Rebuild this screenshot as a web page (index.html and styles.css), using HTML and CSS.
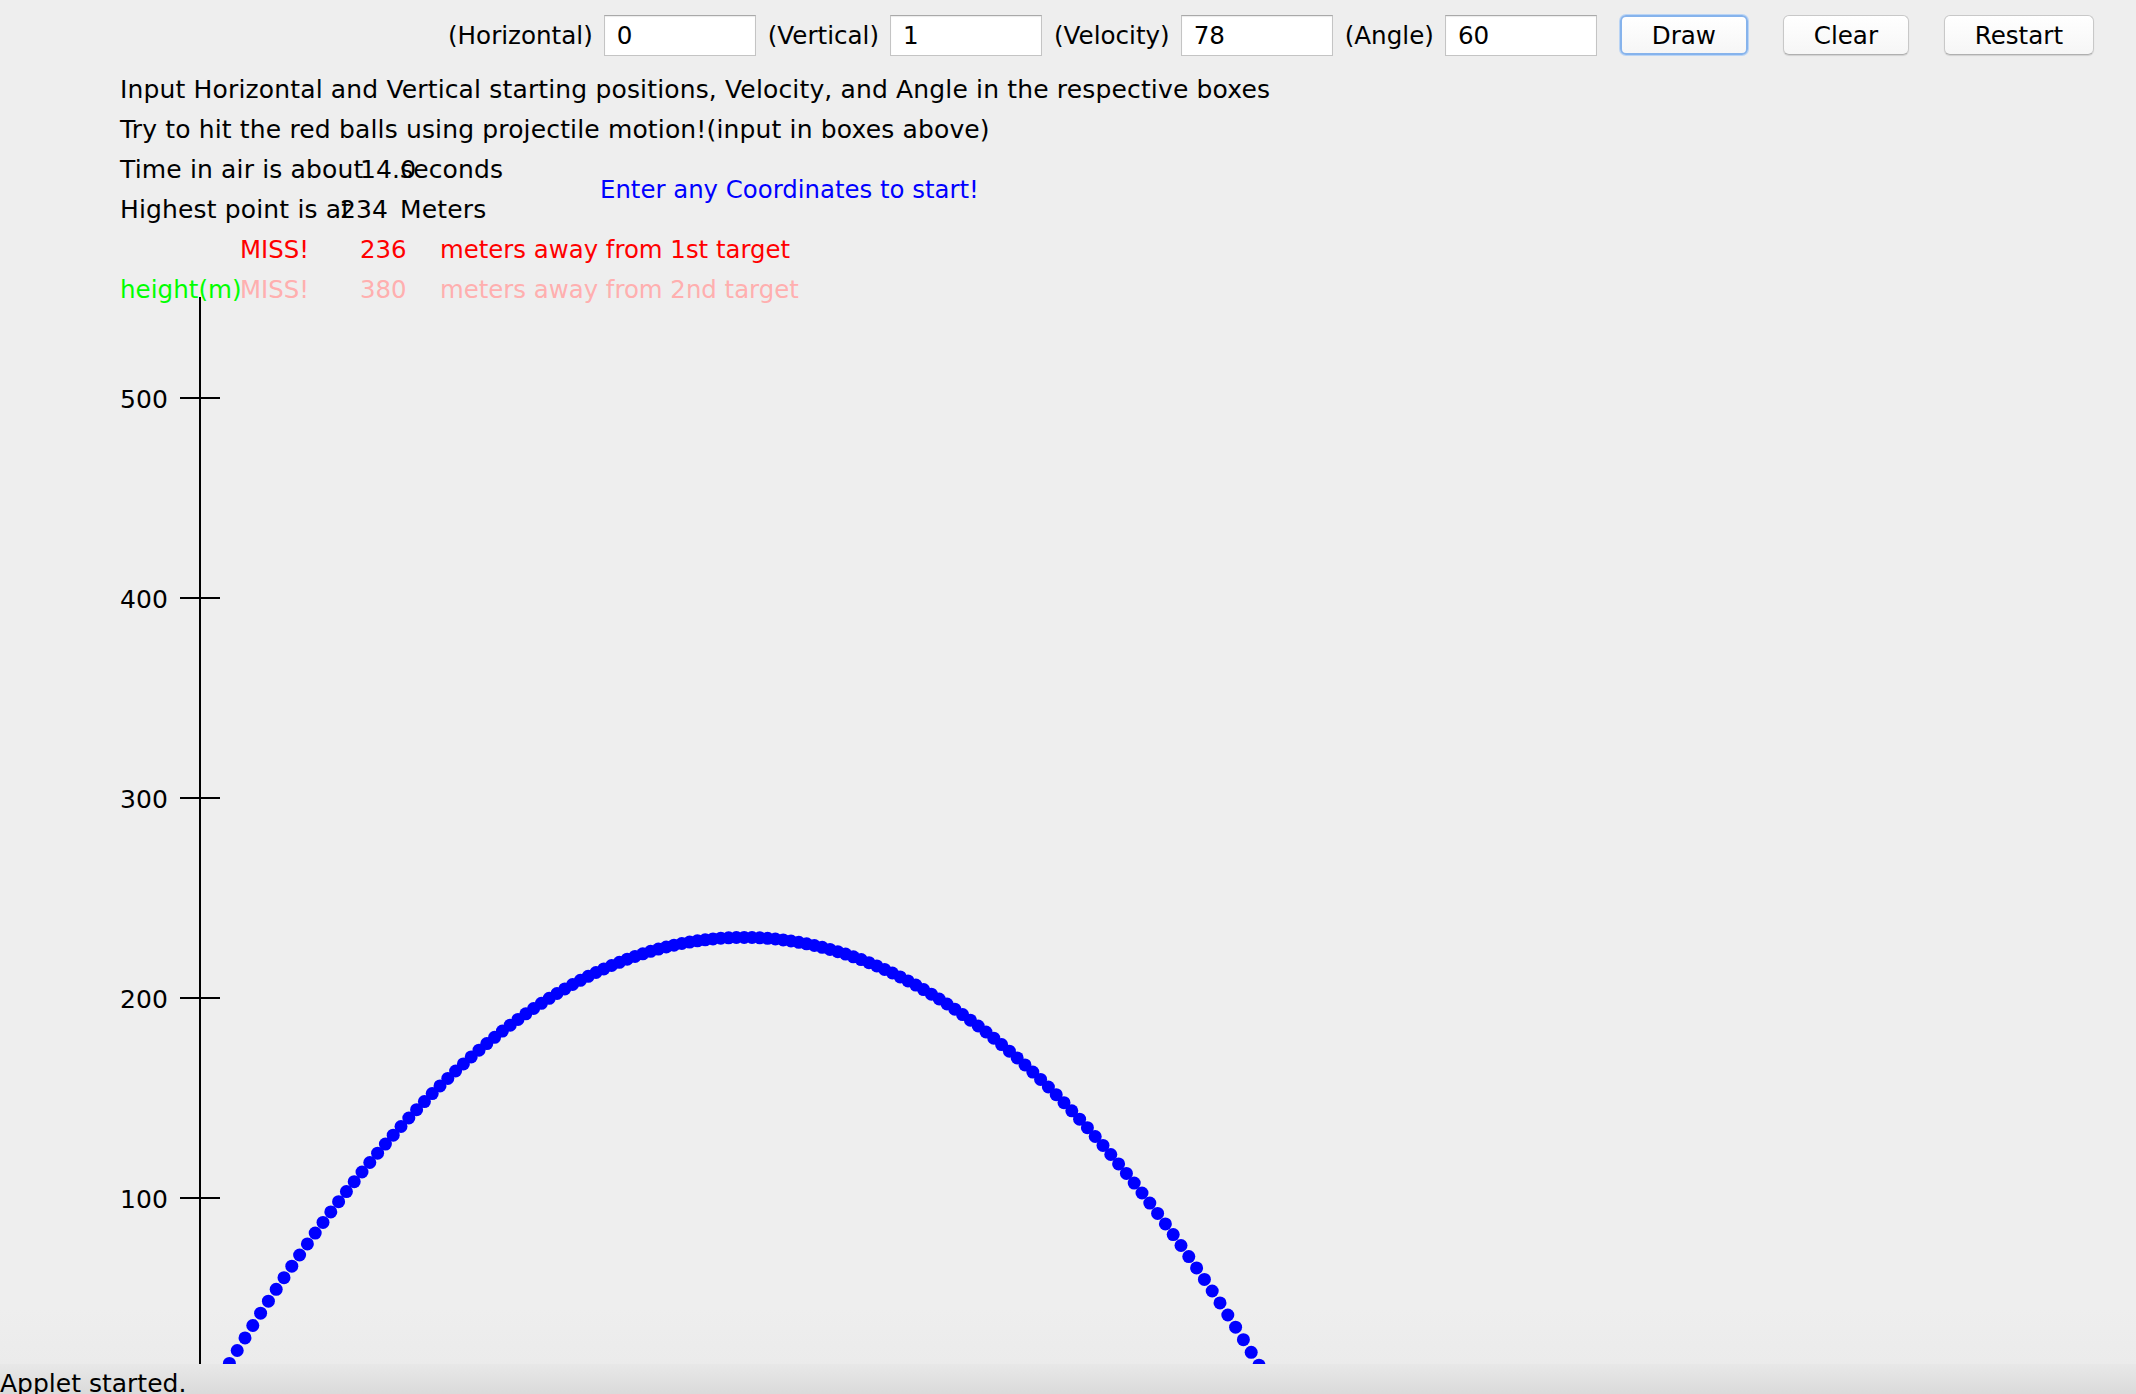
FILE: index.html
```html
<!DOCTYPE html>
<html>
<head>
<meta charset="utf-8">
<link rel="stylesheet" href="styles.css">
</head>
<body>
<div class="applet">
  <div class="toolbar">
    <span class="lbl">(Horizontal)</span><span class="field">0</span>
    <span class="lbl">(Vertical)</span><span class="field">1</span>
    <span class="lbl">(Velocity)</span><span class="field">78</span>
    <span class="lbl">(Angle)</span><span class="field">60</span>
    <span class="btn btn-focus">Draw</span>
    <span class="btn">Clear</span>
    <span class="btn btn-wide">Restart</span>
  </div>
  <div class="canvas">
    <svg id="plot" class="plot" viewBox="0 70 2136 1294" width="2136" height="1294">
      <g class="txt">
        <text x="120" y="98">Input Horizontal and Vertical starting positions, Velocity, and Angle in the respective boxes</text>
        <text x="120" y="138">Try to hit the red balls using projectile motion!(input in boxes above)</text>
        <text x="120" y="178">Time in air is about</text>
        <text x="360" y="178">14.0</text>
        <text x="400" y="178">seconds</text>
        <text x="120" y="218">Highest point is at</text>
        <text x="340" y="218">234</text>
        <text x="400" y="218">Meters</text>
        <text class="blue" x="600" y="198">Enter any Coordinates to start!</text>
        <text class="red" x="240" y="258">MISS!</text>
        <text class="red" x="360" y="258">236</text>
        <text class="red" x="440" y="258">meters away from 1st target</text>
        <text class="green" x="120" y="298">height(m)</text>
        <text class="pink" x="240" y="298">MISS!</text>
        <text class="pink" x="360" y="298">380</text>
        <text class="pink" x="440" y="298">meters away from 2nd target</text>
        <text x="120" y="408">500</text>
        <text x="120" y="608">400</text>
        <text x="120" y="808">300</text>
        <text x="120" y="1008">200</text>
        <text x="120" y="1208">100</text>
      </g>
      <g class="axis">
        <line x1="200" y1="297" x2="200" y2="1364"/>
        <line x1="180" y1="398" x2="220" y2="398"/>
        <line x1="180" y1="598" x2="220" y2="598"/>
        <line x1="180" y1="798" x2="220" y2="798"/>
        <line x1="180" y1="998" x2="220" y2="998"/>
        <line x1="180" y1="1198" x2="220" y2="1198"/>
      </g>
      <g id="dots" class="dots"></g>
    </svg>
  </div>
</div>
<div class="status">Applet started.</div>
<script src="script.js"></script>
</body>
</html>
```

FILE: styles.css
```css
html, body {
  margin: 0;
  padding: 0;
  width: 2136px;
  height: 1394px;
  overflow: hidden;
  background: #eeeeee;
  font-family: "DejaVu Sans", Verdana, sans-serif;
  color: #000;
}
.applet {
  height: 1364px;
  display: flex;
  flex-direction: column;
  background: linear-gradient(#eeeeee 96%, #ebebeb 100%);
}
.toolbar {
  height: 70px;
  display: flex;
  align-items: center;
  padding-left: 448px;
  font-size: 24.6px;
  box-sizing: border-box;
}
.lbl {
  margin-right: 11px;
  white-space: nowrap;
}
.field {
  width: 152px;
  height: 41px;
  box-sizing: border-box;
  background: #fff;
  border: 1px solid #c4c4c4;
  border-top-color: #a9a9a9;
  box-shadow: inset 0 1px 1px rgba(0,0,0,0.08);
  padding-left: 12px;
  display: flex;
  align-items: center;
  margin-right: 12px;
}
.btn {
  width: 126px;
  height: 40px;
  box-sizing: border-box;
  display: flex;
  align-items: center;
  justify-content: center;
  background: linear-gradient(#ffffff, #f6f6f6);
  border: 1px solid #c8c8c8;
  border-bottom-color: #b0b0b0;
  border-radius: 6px;
  margin-left: 35px;
  box-shadow: 0 1px 1px rgba(0,0,0,0.12);
}
.btn-focus {
  width: 128px;
  margin-left: 11px;
  border: 2px solid #86b3ec;
  box-shadow: 0 0 0 1px #b9d4f5;
}
.btn-wide {
  width: 150px;
}
.canvas {
  flex: 1;
  overflow: hidden;
}
.plot {
  display: block;
}
.txt text {
  font-family: "DejaVu Sans", Verdana, sans-serif;
  font-size: 25px;
  letter-spacing: 0.15px;
  fill: #000;
}
.txt .blue { fill: #0000ff; font-size: 24.4px; letter-spacing: 0; }
.txt .red { fill: #ff0000; font-size: 24.4px; letter-spacing: 0; }
.txt .pink { fill: #ffafaf; font-size: 24.4px; letter-spacing: 0; }
.txt .green { fill: #00ff00; font-size: 24.6px; letter-spacing: 0; }
.axis line {
  stroke: #000;
  stroke-width: 2;
}
.dots circle {
  fill: #0000ff;
}
.status {
  height: 30px;
  background: linear-gradient(#e8e8e8, #d8d8d8);
  font-size: 25px;
  line-height: 30px;
  padding-top: 5px;
  white-space: nowrap;
}
```

FILE: script.js
```js
(function () {
  var g = document.getElementById('dots');
  var ns = 'http://www.w3.org/2000/svg';
  var vx = 78 * Math.cos(Math.PI / 3);
  var vy = 78 * Math.sin(Math.PI / 3);
  for (var i = 0; i <= 142; i++) {
    var t = i / 10;
    var x = vx * t;
    var y = 1 + vy * t - 4.9 * t * t;
    var c = document.createElementNS(ns, 'circle');
    c.setAttribute('cx', (200 + 2 * x + 6).toFixed(1));
    c.setAttribute('cy', (1399 - 2 * y + 6).toFixed(1));
    c.setAttribute('r', '6.5');
    g.appendChild(c);
  }
})();
```
